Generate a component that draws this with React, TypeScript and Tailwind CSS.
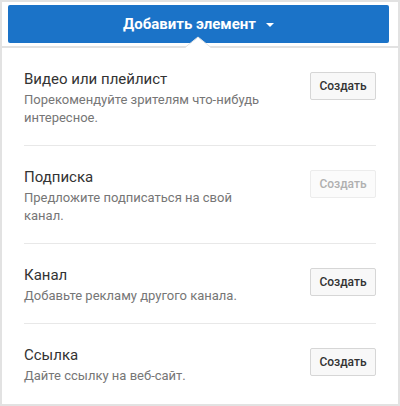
const items = [
  { title: "Видео или плейлист", desc: "Порекомендуйте зрителям что-нибудь интересное.", disabled: false },
  { title: "Подписка", desc: "Предложите подписаться на свой канал.", disabled: true },
  { title: "Канал", desc: "Добавьте рекламу другого канала.", disabled: false },
  { title: "Ссылка", desc: "Дайте ссылку на веб-сайт.", disabled: false },
];

export default function App() {
  return (
    <div
      className="relative w-[400px] h-[406px] overflow-hidden border-2 border-[#e2e2e2] bg-white"
      style={{ fontFamily: "Roboto, 'Liberation Sans', sans-serif" }}
    >
      {/* header */}
      <div className="h-[44px] pl-[6px] pr-[9px] pt-[3px]">
        <button
          type="button"
          className="flex h-[38px] w-full items-center justify-center rounded-[2px] bg-[#1b73c8] text-[15px] font-bold text-white"
        >
          Добавить элемент
          <span className="ml-[10px] mt-[1px] h-0 w-0 border-x-[4.5px] border-t-[4.5px] border-x-transparent border-t-white" />
        </button>
      </div>

      {/* notch */}
      <svg className="absolute left-[183px] top-[34px]" width="26" height="12" viewBox="0 0 26 12">
        <polygon points="0,12 13,1 26,12" fill="#fff" />
        <polyline points="0,11.5 13,1 26,11.5" fill="none" stroke="#e4e4e4" strokeWidth="1" />
      </svg>

      {/* panel */}
      <div className="border-t-2 border-[#e2e2e2]">
        <ul className="mx-[22px]">
          {items.map((it, i) => (
            <li
              key={it.title}
              className={`flex items-start justify-between pt-[19px] pb-[18px] ${i < items.length - 1 ? "border-b border-[#e8e8e8]" : ""}`}
            >
              <div className="w-[250px]">
                <p className="text-[15px] leading-[24px] text-[#333]">{it.title}</p>
                <p className="text-[13px] leading-[18px] text-[#767676]">{it.desc}</p>
              </div>
              <button
                type="button"
                disabled={it.disabled}
                className={`mt-[5px] h-[28px] w-[66px] rounded-[2px] border text-[12px] font-medium ${
                  it.disabled
                    ? "border-[#ececec] bg-[#fbfbfb] text-[#b0b0b0]"
                    : "border-[#d6d6d6] bg-[#f8f8f8] text-[#333]"
                }`}
              >
                Создать
              </button>
            </li>
          ))}
        </ul>
      </div>
    </div>
  );
}
